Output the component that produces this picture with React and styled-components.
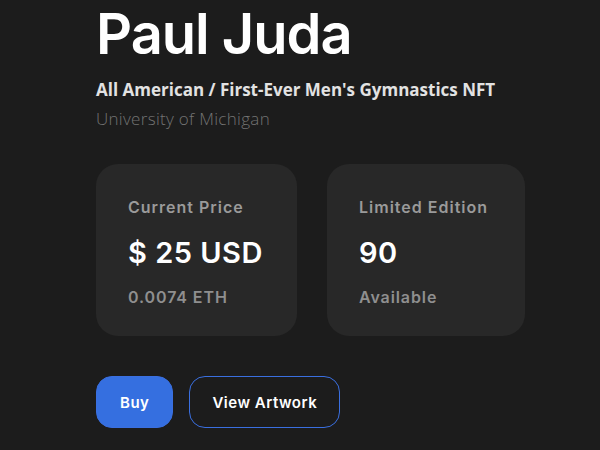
import React from "react";
import styled, { createGlobalStyle } from "styled-components";

const Global = createGlobalStyle`
  html, body { margin: 0; padding: 0; background: #1c1c1c; }
  body { font-family: "Inter", "Liberation Sans", sans-serif; }
`;

const Page = styled.div`
  width: 600px;
  height: 450px;
  overflow: hidden;
  background: #1c1c1c;
  padding: 0 0 0 96px;
  box-sizing: border-box;
`;

const Title = styled.h1`
  margin: 0;
  padding-top: 2px;
  font-family: "Inter", sans-serif;
  font-weight: 600;
  font-size: 56px;
  line-height: 64px;
  letter-spacing: -1px;
  color: #ffffff;
`;

const Subtitle = styled.div`
  margin-top: 13px;
  font-family: "Open Sans", sans-serif;
  font-weight: 700;
  font-size: 17px;
  line-height: 22px;
  color: #e2e2e2;
`;

const School = styled.div`
  margin-top: 7px;
  font-family: "Open Sans", sans-serif;
  font-weight: 300;
  font-size: 17px;
  line-height: 22px;
  letter-spacing: 0.3px;
  color: #737373;
`;

const Cards = styled.div`
  display: flex;
  gap: 30px;
  margin-top: 34px;
`;

const Card = styled.div`
  width: ${(p) => p.$w}px;
  height: 172px;
  box-sizing: border-box;
  background: #282828;
  border-radius: 22px;
  padding: 33px 0 0 32px;
  display: flex;
  flex-direction: column;
  white-space: nowrap;
`;

const Label = styled.div`
  font-size: 16px;
  font-weight: 600;
  line-height: 20px;
  letter-spacing: 1px;
  color: #9a9a9a;
`;

const Value = styled.div`
  margin-top: 18px;
  font-size: 29px;
  font-weight: 600;
  line-height: 36px;
  letter-spacing: 0.5px;
  color: #ffffff;
`;

const Note = styled.div`
  margin-top: 16px;
  font-size: 16px;
  font-weight: 600;
  line-height: 20px;
  letter-spacing: 0.9px;
  color: #8f8f8f;
`;

const Actions = styled.div`
  display: flex;
  gap: 16px;
  margin-top: 40px;
`;

const Button = styled.button`
  height: 52px;
  box-sizing: border-box;
  padding: 0 ${(p) => (p.$primary ? 23 : 22)}px;
  border-radius: 16px;
  border: 1px solid #3a6fe0;
  background: ${(p) => (p.$primary ? "#356fe0" : "transparent")};
  color: #ffffff;
  font-family: "Inter", sans-serif;
  font-size: 15px;
  font-weight: 600;
  letter-spacing: 0.5px;
  cursor: pointer;
`;

export default function App() {
  return (
    <>
      <Global />
      <Page>
        <Title>Paul Juda</Title>
        <Subtitle>All American / First-Ever Men's Gymnastics NFT</Subtitle>
        <School>University of Michigan</School>
        <Cards>
          <Card $w={201}>
            <Label>Current Price</Label>
            <Value>$ 25 USD</Value>
            <Note>0.0074 ETH</Note>
          </Card>
          <Card $w={198}>
            <Label>Limited Edition</Label>
            <Value>90</Value>
            <Note>Available</Note>
          </Card>
        </Cards>
        <Actions>
          <Button $primary>Buy</Button>
          <Button>View Artwork</Button>
        </Actions>
      </Page>
    </>
  );
}
